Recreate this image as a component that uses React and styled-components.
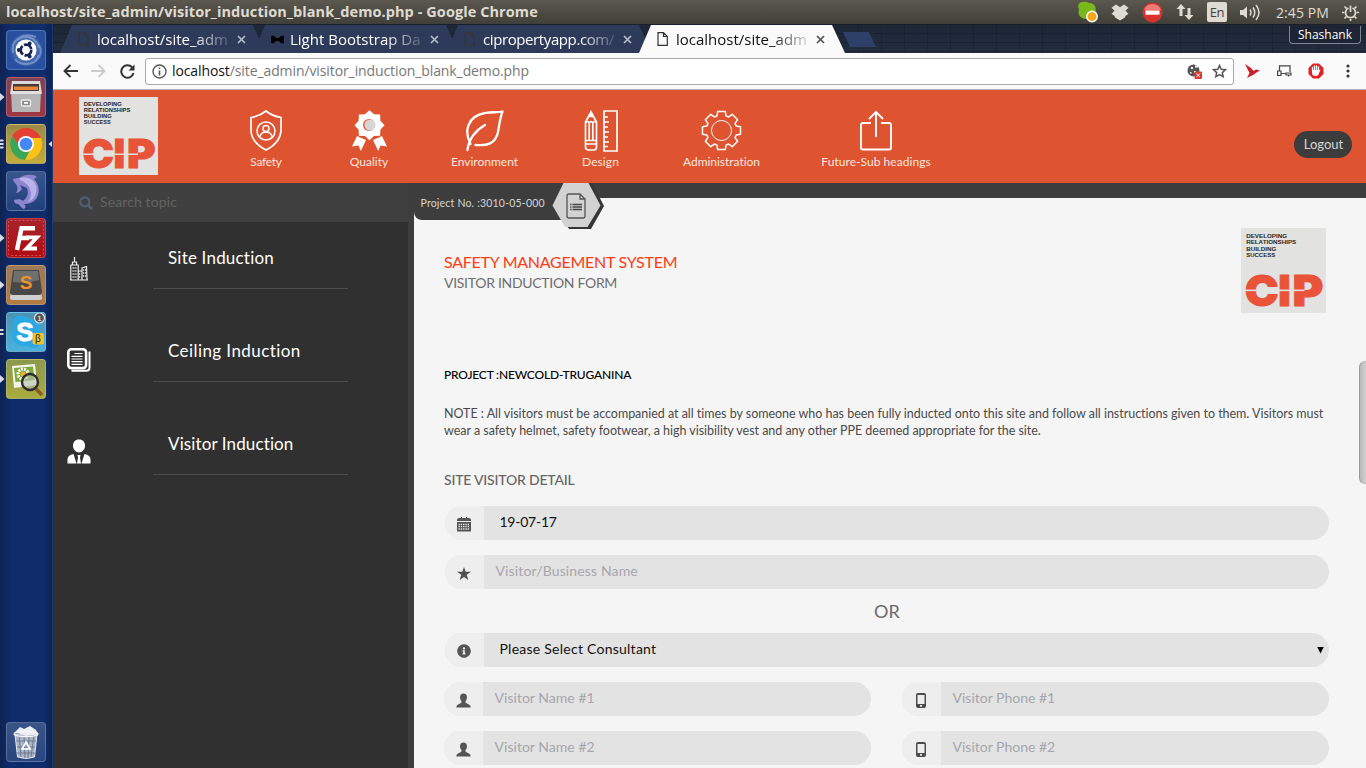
import React from "react";
import styled, { createGlobalStyle, css } from "styled-components";
import { FaInfoCircle } from "react-icons/fa";

const Global = createGlobalStyle`
  *, *::before, *::after { box-sizing: border-box; }
  html, body { margin: 0; padding: 0; overflow: hidden; }
  body { font-family: Lato, "Liberation Sans", sans-serif; font-variant-ligatures: none; }
  svg { display: block; flex: none; }
`;

const uiFont = '"Open Sans", "Noto Sans", sans-serif';

/* ---------- desktop frame ---------- */

const Desktop = styled.div`
  width: 1366px;
  height: 768px;
  display: flex;
  flex-direction: column;
  overflow: hidden;
`;

const TitleBar = styled.header`
  height: 24px;
  flex: none;
  display: flex;
  align-items: center;
  justify-content: space-between;
  padding: 0 7px 0 6px;
  background: linear-gradient(#5b584e, #403f39);
  color: #dfdbd2;
  font-family: ${uiFont};
`;

const WindowTitle = styled.div`
  font-size: 14.5px;
  font-weight: 700;
  letter-spacing: 0.075px;
  line-height: 22px;
  white-space: nowrap;
`;

const Tray = styled.div`
  display: flex;
  align-items: center;
  height: 24px;
`;

const TrayItem = styled.div`
  margin-left: ${(p) => p.$gap}px;
`;

const Lang = styled(TrayItem)`
  width: 20px;
  height: 20px;
  border-radius: 2px;
  background: #dfdbd2;
  color: #45433c;
  font-size: 13px;
  line-height: 20px;
  letter-spacing: -0.4px;
  text-align: center;
`;

const Clock = styled(TrayItem)`
  font-size: 14px;
  line-height: 23px;
  letter-spacing: 0.1px;
  white-space: nowrap;
`;

const Workspace = styled.div`
  flex: 1;
  min-height: 0;
  display: flex;
`;

const Launcher = styled.aside`
  width: 53px;
  flex: none;
  display: flex;
  flex-direction: column;
  align-items: flex-start;
  gap: 7px;
  padding: 6px 0 6px;
  background: linear-gradient(90deg, #0e2352, #0e2c69 20%, #0f2d6b 85%, #0b2354);
  border-right: 1px solid #1d3a73;
`;

const Slot = styled.div`
  height: 40px;
  width: 53px;
  display: grid;
  grid-template-columns: 6px 40px 6px;
  align-items: center;
  ${(p) => p.$bottom && css`margin-top: auto;`}
`;

const Tile = styled.div`
  width: 40px;
  height: 40px;
  border-radius: 4px;
  border: 1px solid rgba(255, 255, 255, 0.2);
  background: ${(p) => p.$bg};
  display: flex;
  align-items: center;
  justify-content: center;
  overflow: hidden;
`;

/* ---------- browser chrome ---------- */

const Browser = styled.main`
  flex: 1;
  min-width: 0;
  display: flex;
  flex-direction: column;
`;

const TabStrip = styled.div`
  height: 29px;
  flex: none;
  display: flex;
  align-items: flex-end;
  padding-left: 7px;
  background:
    repeating-linear-gradient(90deg, rgba(10, 16, 28, 0.2) 0 1px, transparent 1px 23px),
    repeating-linear-gradient(rgba(10, 16, 28, 0.3) 0 1px, transparent 1px 9px),
    linear-gradient(#1d2635, #232d3f);
  font-family: ${uiFont};
`;

const Tab = styled.div`
  width: 206px;
  height: 28px;
  margin-right: -13px;
  position: relative;
  z-index: ${(p) => (p.$active ? 2 : 1)};
  display: grid;
  grid-template-columns: 12px 133px 12px;
  column-gap: 7px;
  align-items: center;
  padding: 0 0 0 18px;
  color: ${(p) => (p.$active ? "#111" : "#fff")};
  background: ${(p) => (p.$active ? "#fafafa" : "#2d3a59")};
  clip-path: polygon(0 100%, 12px 0, 193px 0, 100% 100%);
`;

const TabLabel = styled.span`
  font-size: 15px;
  line-height: 26px;
  padding-bottom: 1px;
  white-space: nowrap;
  overflow: hidden;
  letter-spacing: ${(p) => p.$ls || 0}px;
  mask-image: linear-gradient(90deg, #000 72%, rgba(0, 0, 0, 0.12));
`;

const NewTab = styled.div`
  width: 33px;
  height: 15px;
  margin: 0 0 6px 11px;
  background: #2f4068;
  clip-path: polygon(0 0, 26px 0, 100% 100%, 7px 100%);
`;

const UserBadge = styled.div`
  align-self: flex-start;
  margin: 2px 5px 0 auto;
  width: 72px;
  height: 18px;
  border: 1px solid #7d8591;
  border-top: 0;
  border-radius: 0 0 4px 4px;
  background: #1d2433;
  color: #fff;
  font-size: 12px;
  line-height: 18px;
  text-align: center;
`;

const Toolbar = styled.div`
  height: 37px;
  flex: none;
  display: flex;
  align-items: center;
  padding: 0 0 0 10px;
  background: #fafafa;
  border-bottom: 1px solid #b4b4b4;
  font-family: ${uiFont};
`;

const ToolIcon = styled.div`
  width: ${(p) => p.$w}px;
  margin-left: ${(p) => p.$gap || 0}px;
`;

const AddressBar = styled.div`
  width: 1089px;
  height: 27px;
  margin-left: 10px;
  display: flex;
  align-items: center;
  border: 1px solid #a9a9a9;
  border-radius: 3px;
  background: #fff;
  padding: 0 6px;
`;

const Url = styled.div`
  flex: 1;
  margin-left: 5px;
  font-size: 14px;
  line-height: 24px;
  letter-spacing: -0.1px;
  color: #777;
  white-space: nowrap;
`;

const UrlHost = styled.span`
  color: #111;
`;

/* ---------- site header ---------- */

const SiteHeader = styled.header`
  height: 93px;
  flex: none;
  display: flex;
  align-items: flex-start;
  padding: 7px 14px 0 26px;
  background: #de5330;
`;

const Nav = styled.nav`
  flex: 1;
  display: flex;
  align-items: flex-start;
  padding-top: 13px;
`;

const NavItem = styled.a`
  width: ${(p) => p.$w}px;
  margin-left: ${(p) => p.$gap}px;
  display: flex;
  flex-direction: column;
  align-items: center;
`;

const NavIcon = styled.span`
  height: 43px;
  display: flex;
`;

const NavLabel = styled.span`
  font-size: 12px;
  line-height: 18px;
  letter-spacing: ${(p) => p.$ls || 0}px;
  color: #fbe6df;
  white-space: nowrap;
`;

const Logout = styled.button`
  margin-top: 34px;
  width: 58px;
  height: 27px;
  padding: 0 0 1px 1px;
  border: 0;
  border-radius: 14px;
  background: #3c3c3c;
  color: #d6d6d6;
  font: 13px/26px Lato, sans-serif;
`;

/* ---------- page body ---------- */

const Page = styled.div`
  flex: 1;
  min-height: 0;
  display: flex;
  background: #3d3d3d;
`;

const Sidebar = styled.aside`
  width: 355px;
  flex: none;
  margin-right: 6px;
  background: #303030;
`;

const Search = styled.div`
  height: 39px;
  display: flex;
  align-items: center;
  gap: 7px;
  padding-left: 26px;
  background: #404040;
  color: #636363;
  font-size: 14px;
  letter-spacing: 0.11px;
`;

const SearchHint = styled.span`
  padding-bottom: 3px;
`;

const Topic = styled.a`
  height: 93px;
  display: grid;
  grid-template-columns: 100px 195px;
  color: #fff;
`;

const TopicIcon = styled.span`
  display: flex;
  justify-content: flex-start;
  padding: ${(p) => p.$top}px 0 0 ${(p) => p.$left}px;
`;

const TopicLabel = styled.span`
  height: 67px;
  padding: 25px 0 0 15px;
  border-bottom: 1px solid #4e4e4e;
  font-size: 17px;
  line-height: 22px;
  letter-spacing: ${(p) => p.$ls}px;
  white-space: nowrap;
`;

const Main = styled.section`
  flex: 1;
  min-width: 0;
  display: flex;
  flex-direction: column;
`;

const Sheet = styled.div`
  flex: 1;
  min-height: 0;
  margin-top: 15px;
  display: flex;
  background: #f5f5f5;
`;

const Content = styled.div`
  width: 945px;
  flex: none;
  padding: 0 30px;
`;

const ProjectTag = styled.div`
  width: 190px;
  height: 45px;
  margin: -15px 0 0 -30px;
  display: flex;
  align-items: flex-start;
`;

const ProjectNo = styled.div`
  width: 148px;
  height: 37px;
  flex: none;
  padding: 10px 0 0 6.5px;
  border-radius: 0 0 0 8px;
  background: #3d3d3d;
  color: #d6d6d6;
  font-size: 10.5px;
  line-height: 20px;
  letter-spacing: 0.2px;
  white-space: nowrap;
`;

const HexBadge = styled.div`
  margin-left: -10px;
`;

const Heading = styled.div`
  display: flex;
  justify-content: space-between;
  height: 138px;
  padding-right: 3px;
`;

const Titles = styled.div`
  padding-top: 22px;
`;

const Title = styled.h1`
  margin: 0;
  font-size: 16px;
  font-weight: 400;
  line-height: 24px;
  letter-spacing: -0.26px;
  color: #fb3c14;
`;

const Subtitle = styled.h2`
  margin: 0;
  font-size: 14px;
  font-weight: 400;
  line-height: 18px;
  letter-spacing: -0.3px;
  color: #6e6e6e;
`;

const ProjectName = styled.p`
  margin: 0;
  font-size: 12px;
  font-weight: 500;
  line-height: 18px;
  letter-spacing: -0.18px;
  color: #000;
`;

const Note = styled.p`
  margin: 21px 0 0;
  font-size: 12.5px;
  line-height: 17px;
  letter-spacing: -0.028px;
  color: #4a4a4a;
  white-space: nowrap;
`;

const SectionTitle = styled.h3`
  margin: 31px 0 16px;
  font-size: 14px;
  font-weight: 500;
  line-height: 20px;
  letter-spacing: -0.2px;
  color: #666;
`;

const Field = styled.div`
  flex: none;
  width: ${(p) => p.$w}px;
  height: 34px;
  display: flex;
  border-radius: 17px;
  overflow: hidden;
  background: #e3e3e3;
`;

const Addon = styled.div`
  width: 39px;
  flex: none;
  display: flex;
  align-items: center;
  justify-content: center;
  padding: 2px 1px 0 0;
  background: #eee;
  color: #555;
`;

const Value = styled.div`
  flex: 1;
  padding-left: ${(p) => (p.$filled ? 15.5 : 11.5)}px;
  color: ${(p) => (p.$filled ? "#111" : "#a6a6ad")};
  font-size: 14px;
  line-height: 32px;
  letter-spacing: ${(p) => p.$ls || 0}px;
  white-space: nowrap;
`;

const Caret = styled.span`
  align-self: center;
  margin-right: 5px;
  width: 7px;
  height: 7px;
  background: #000;
  clip-path: polygon(0 0, 100% 0, 50% 100%);
`;

const Rows = styled.div`
  display: flex;
  flex-direction: column;
  gap: 15px;
  padding-left: 1px;
`;

const Pair = styled.div`
  display: flex;
  justify-content: space-between;
  margin-left: -1px;
`;

const Or = styled.div`
  margin: -6px 0;
  width: 884px;
  height: 26px;
  line-height: 26px;
  font-size: 18px;
  letter-spacing: 0.1px;
  text-align: center;
  color: #6a6a6a;
`;

const ScrollTrack = styled.div`
  width: 7px;
  padding-top: 163px;
`;

const ScrollThumb = styled.div`
  height: 123px;
  border: 1px solid #b5b5b5;
  border-left-color: #999;
  border-right: 0;
  border-radius: 6px 0 0 6px;
  background: linear-gradient(90deg, #b9b9b9, #d0d0d0);
`;

/* ---------- drawings ---------- */

const CipLogo = ({ w, h }) => (
  <svg width={w} height={h} viewBox="0 0 79 79" preserveAspectRatio="none" fontFamily="Inter, 'Liberation Sans', sans-serif">
    <rect width="79" height="79" fill="#e2e2e0" />
    <g fontSize="5.7" fontWeight="700" fill="#262626" fontFamily="'Liberation Sans', sans-serif">
      <text x="4.8" y="9.3" textLength="38" lengthAdjust="spacingAndGlyphs">DEVELOPING</text>
      <text x="4.8" y="15.2" textLength="46.5" lengthAdjust="spacingAndGlyphs">RELATIONSHIPS</text>
      <text x="4.8" y="21.1" textLength="28" lengthAdjust="spacingAndGlyphs">BUILDING</text>
      <text x="4.8" y="27" textLength="27" lengthAdjust="spacingAndGlyphs">SUCCESS</text>
    </g>
    <g fontSize="40" fontWeight="900" fill="#e9533a" stroke="#e9533a" strokeWidth="0.900">
      <text x="3.4" y="72.4" textLength="31.500" lengthAdjust="spacingAndGlyphs">C</text>
      <text x="34.600" y="72.4">I</text>
      <text x="47.9" y="72.4" textLength="28.6" lengthAdjust="spacingAndGlyphs">P</text>
    </g>
    <rect x="3" y="57.2" width="11" height="1.5" fill="#e2e2e0" />
    <rect x="35.500" y="57.2" width="11" height="1.5" fill="#e2e2e0" />
    <rect x="49" y="57.2" width="10" height="1.5" fill="#e2e2e0" />
  </svg>
);

const ShieldIcon = () => (
  <svg width="32" height="41" viewBox="0 0 32 41" fill="none" stroke="#fff" strokeWidth="1.7">
    <path d="M16 1 Q10 6 1 7.500V21Q2 33 16 40Q30 33 31 21V7.500Q22 6 16 1Z" />
    <circle cx="16" cy="21" r="9" strokeWidth="1.500" />
    <circle cx="16" cy="18.500" r="3" strokeWidth="1.500" />
    <path d="M9.500 27.500Q11 22.500 14 22.200H18Q21 22.500 22.500 27.500" strokeWidth="1.500" />
  </svg>
);

const starPoints = Array.from({ length: 16 }, (_, i) => {
  const r = i % 2 ? 11.8 : 15;
  const a = (i * Math.PI) / 8 - Math.PI / 2;
  return `${(17.5 + r * Math.cos(a)).toFixed(2)},${(15.2 + r * Math.sin(a)).toFixed(2)}`;
}).join(" ");

const QualityIcon = () => (
  <svg width="35" height="41" viewBox="0 0 35 41">
    <polygon points={starPoints} fill="#fff" />
    <path d="M5 26L14 30L8.800 41L6.500 35.500L0 36.500ZM30 26L21 30L26.200 41L28.500 35.500L35 36.500Z" fill="#fff" />
    <path d="M7.500 27H13M22 27H27.500" stroke="#de5330" />
    <circle cx="17" cy="15" r="6" fill="#de5330" />
    <circle cx="18" cy="15" r="5.600" fill="#d6d6d6" />
  </svg>
);

const LeafIcon = () => (
  <svg width="39" height="42" viewBox="0 0 39 42" fill="none" stroke="#fff" strokeWidth="2.300" strokeLinecap="round" strokeLinejoin="round">
    <path d="M2.500 40C3.500 29 11 20 20 15M5.500 34C-1 22 2 6 20 3C27 1.500 33 3 37.500 1.500C35 8 34.500 14 33 22C30.500 34 22 36 10.500 35" />
  </svg>
);

const DesignIcon = () => (
  <svg width="34" height="42" viewBox="0 0 34 42" fill="none" stroke="#fff" strokeWidth="1.700">
    <path d="M1.500 12L7 2L12.500 12V37Q12.500 40 9.500 40H4.500Q1.500 40 1.500 37ZM1.500 30.500H12.500M1.500 34H12.500M5.200 13V30M8.800 13V30M1.500 13Q3.500 10 5.200 13Q7 10 8.800 13Q10.500 10 12.500 13" />
    <path d="M5 6.500L7 2.500L9 6.500Z" fill="#fff" />
    <path d="M20 1H33V41H20ZM20 7H24M20 12H25M20 17H24M20 22H25M20 27H24M20 32H25M20 36.500H24" />
  </svg>
);

const gearPoints = Array.from({ length: 8 }, (_, i) => {
  const a = (i * Math.PI) / 4;
  return [
    [15.3, -0.3],
    [19.4, -0.2],
    [19.4, 0.2],
    [15.3, 0.3],
  ].map(([r, d]) => `${(20.5 + r * Math.cos(a + d)).toFixed(2)},${(20.5 + r * Math.sin(a + d)).toFixed(2)}`);
})
  .flat()
  .join(" ");

const GearIcon = () => (
  <svg width="41" height="41" viewBox="0 0 41 41" fill="none" stroke="#fff" strokeWidth="1.500" strokeLinejoin="round">
    <polygon points={gearPoints} />
    <circle cx="20.500" cy="20.500" r="10" strokeWidth="1" />
  </svg>
);

const ShareIcon = () => (
  <svg width="32" height="41" viewBox="0 0 32 41" fill="none" stroke="#fff" strokeWidth="1.900" strokeLinejoin="round">
    <path d="M11 13H3Q1 13 1 15V37.500Q1 39.500 3 39.500H29Q31 39.500 31 37.500V15Q31 13 29 13H21" />
    <path d="M16 27V2M9 9L16 1.800L23 9" />
  </svg>
);

const PersonIcon = () => (
  <svg width="15" height="15" viewBox="0 0 15 15" fill="currentColor">
    <path d="M7.500 0.500C9.700 0.500 11 2 11 4.200C11 6 10.300 7.300 9.400 8.200C9.400 9.800 9.900 10 11.500 10.700C13.700 11.600 14.700 12.300 14.700 14.500H0.300C0.300 12.300 1.300 11.600 3.500 10.700C5.100 10 5.600 9.800 5.600 8.200C4.700 7.300 4 6 4 4.200C4 2 5.300 0.500 7.500 0.500Z" />
  </svg>
);

const PhoneIcon = () => (
  <svg width="10" height="15" viewBox="0 0 10 15">
    <rect width="10" height="15" rx="2" fill="#4c4c4c" />
    <rect x="1.500" y="2" width="7" height="9" fill="#eee" />
    <rect x="4" y="12" width="2" height="1.700" fill="#eee" />
  </svg>
);

const CalendarIcon = () => (
  <svg width="14" height="15" viewBox="0 0 14 15">
    <path d="M2 1h2v-1h1v1h4v-1h1v1h2q2 0 2 2v1H0V3q0-2 2-2ZM0 5h14v9.500H0Z" fill="#555" />
    <path d="M1.500 7.500H12.500M1.500 9.700H12.500M1.500 12H12.500" stroke="#eee" strokeWidth="1.300" strokeDasharray="1.300 1" />
  </svg>
);

const StarIcon = () => (
  <svg width="14" height="13" viewBox="0 0 14 13" fill="#505050">
    <path d="M7 0L8.700 4.700H14L9.700 7.800L11.300 13L7 9.900L2.700 13L4.300 7.800L0 4.700H5.300Z" />
  </svg>
);

const HexIcon = () => (
  <svg width="52" height="46" viewBox="0 0 52 46">
    <path d="M13 0H40L52 23L39 46H17L4 23Z" fill="#363636" />
    <path d="M11.500 0H36.500L48.500 22.500L35.500 44H13L0.500 22.500Z" fill="#d2d2d2" />
    <path d="M17 11H28L33 16V33Q33 35 31 35H17Q15 35 15 33V13Q15 11 17 11ZM28 11V16H33" fill="none" stroke="#555" strokeWidth="1.300" />
    <path d="M20.500 21.500H30M20.500 24H30M20.500 26.500H30" stroke="#444" strokeWidth="1.300" />
    <path d="M18.200 21.500H19.500M18.200 24H19.500M18.200 26.500H19.500" stroke="#444" strokeWidth="1.300" />
  </svg>
);

const CityIcon = () => (
  <svg width="18" height="24" viewBox="0 0 18 24" fill="none" stroke="#eee" strokeWidth="1.200">
    <path d="M4.500 0V5M2.500 8V5H6.500V8M0.800 23V8H8.200V23ZM8.200 14H12V23M12 23V11L16.500 9.500L17 23ZM0 23H18" />
    <path d="M2.500 11H7M2.500 14H7M2.500 17H7M2.500 20H7M13 13H16M13 16H16M13 19H16M9 17H11M9 20H11" strokeDasharray="1.200 0.800" strokeWidth="1.500" />
  </svg>
);

const DocsIcon = () => (
  <svg width="24" height="24" viewBox="0 0 24 24" fill="none" stroke="#fff">
    <rect x="1.300" y="1.300" width="17.800" height="18.800" rx="3" strokeWidth="2.600" />
    <path d="M22.500 3.500V19.500Q22.500 22.800 19.300 22.800H4.500" strokeWidth="2" />
    <path d="M7.500 5.500H15.500M4.500 8.300H15.500M4.500 11H15.500M4.500 13.700H15.500M4.500 16.400H15.500" strokeWidth="1.200" />
  </svg>
);

const BusinessIcon = () => (
  <svg width="24" height="25" viewBox="0 0 24 25" fill="#fff">
    <path d="M12 0.500C16 0.500 18 3 18 7C18 10.500 15 13.500 12 13.500S6 10.500 6 7C6 3 8 0.500 12 0.500Z" />
    <path d="M6.500 15L9.500 24.500H0.500V20.500Q0.500 16 6.500 15ZM17.500 15L14.500 24.500H23.500V20.500Q23.500 16 17.500 15ZM10.500 16H13.500L13 18.500L14 24.500H10L11 18.500Z" />
  </svg>
);

const FileIcon = ({ color }) => (
  <svg width="11" height="14" viewBox="0 0 11 14" fill="none" stroke={color} strokeWidth="1.200">
    <path d="M1 0.700H6.500L10.300 4.500V13.300H1ZM6.500 0.700V4.500H10.300" />
  </svg>
);

const BowIcon = () => (
  <svg width="13" height="9" viewBox="0 0 13 9">
    <path d="M0 1.500Q1 0 3 1L5.500 3H7.500L10 1Q12 0 13 1.500V7.500Q12 9 10 8L7.500 6H5.500L3 8Q1 9 0 7.500Z" fill="#000" />
  </svg>
);

const CloseIcon = ({ color }) => (
  <svg width="9" height="9" viewBox="0 0 9 9" stroke={color} strokeWidth="1.700">
    <path d="M1 1L8 8M8 1L1 8" />
  </svg>
);

const Arrow = ({ color, flip }) => (
  <svg width="15" height="14" viewBox="0 0 15 14" fill="none" stroke={color} strokeWidth="1.900">
    <path d={flip ? "M0 7H13.500M7.500 1L13.500 7L7.500 13" : "M15 7H1.500M7.500 1L1.500 7L7.500 13"} />
  </svg>
);

const ReloadIcon = () => (
  <svg width="15" height="15" viewBox="0 0 15 15" fill="none" stroke="#333" strokeWidth="2">
    <path d="M13.500 9A6.200 6.200 0 1 1 12 3.200L13 4.500" />
    <path d="M14.500 0.500V6.500H8.500Z" fill="#333" stroke="none" />
  </svg>
);

const PointerIcon = ({ kind }) => (
  <svg width="6" height="12" viewBox="0 0 6 12" fill="#d9dce4" stroke="none">
    {kind === "right" && <path d="M0 2L4.500 6L0 10Z" />}
    {kind === "left" && <path d="M6 3L2.500 6L6 9Z" />}
    {kind === "three" && <path d="M0 1.500H3L4 2.500L3 3.500H0ZM0 5H3L4 6L3 7H0ZM0 8.500H3L4 9.500L3 10.500H0Z" />}
    {kind === "two" && <path d="M0 3H3L4 4L3 5H0ZM0 7H3L4 8L3 9H0Z" />}
  </svg>
);

const UbuntuArt = () => (
  <svg width="38" height="38" viewBox="0 0 38 38">
    <g fill="none" stroke="#b9cbea" strokeWidth="2" opacity="0.450">
      <path d="M6 22C3 9 16 1 29 6M32 14C38 26 26 36 13 32M8 28C14 36 28 35 32 24M10 9C18 2 30 7 32 17" />
    </g>
    <circle cx="19" cy="19" r="10.500" fill="#fff" />
    <circle cx="19" cy="19" r="5.300" fill="none" stroke="#15254f" strokeWidth="2.700" strokeDasharray="9.600 1.500" />
    <circle cx="11.700" cy="19" r="1.900" fill="#15254f" />
    <circle cx="22.700" cy="12.500" r="1.900" fill="#15254f" />
    <circle cx="22.700" cy="25.500" r="1.900" fill="#15254f" />
  </svg>
);

const FilesArt = () => (
  <svg width="38" height="38" viewBox="0 0 38 38">
    <path d="M5 3H33L35 16H3Z" fill="#d9d9d9" />
    <path d="M6 6H32V14H6Z" fill="#4a3a33" />
    <path d="M7 8.500H31V12H7Z" fill="#e8883c" />
    <path d="M4 13H34L33 34H5Z" fill="#b5b5b5" />
    <path d="M4 13H34V16H4Z" fill="#e0e0e0" />
    <rect x="14.500" y="22" width="9" height="6" rx="1" fill="#8a8a8a" stroke="#eee" strokeWidth="1.300" />
    <rect x="17" y="24" width="4" height="1.800" fill="#fff" />
  </svg>
);

const ChromeArt = () => (
  <svg width="38" height="38" viewBox="0 0 38 38">
    <circle cx="19" cy="19" r="16" fill="#fbc116" />
    <path d="M19 19L5.150 11A16 16 0 0 1 32.850 11L33.800 13H19Z" fill="#e34133" />
    <path d="M5.150 11L13.800 22L19 19H27L24.500 22.500L18 35A16 16 0 0 1 5.150 11Z" fill="#3aa757" />
    <path d="M5.150 11A16 16 0 0 1 32.850 11L33.800 13H19A6.500 6.500 0 0 0 12.500 21Z" fill="#e34133" />
    <circle cx="19" cy="19" r="8" fill="#fff" />
    <circle cx="19" cy="19" r="6.300" fill="#4587f4" />
  </svg>
);

const DolphinArt = () => (
  <svg width="38" height="38" viewBox="0 0 38 38">
    <path d="M6 7L13 5.500C20 1 29 3 30 5L27 7C33 13 33 22 29 27C26 31 21 32 17 32C19 34 19 36 17 37C14 36 13 33 11 32C9 32 7 31 7 28C11 27 14 27 16 29C20 26 22 22 20 16L13 13L15 17C13 20 10 21 9 21C11 18 11 15 9 12C7 10 6 9 6 7Z" fill="#8d86cf" />
    <path d="M13 6C21 4 28 8 29.500 15C30 22 27 28 21 30C27 23 24 12 13 8Z" fill="#b9b3ea" />
  </svg>
);

const FilezillaArt = () => (
  <svg width="38" height="38" viewBox="0 0 38 38">
    <rect x="1.500" y="1.500" width="35" height="35" rx="2" fill="none" stroke="#d06a6a" strokeWidth="0.800" strokeDasharray="2 2" />
    <g fill="none" stroke="#fff" strokeWidth="4.400">
      <path d="M10 31L14.500 9.300H28M13 19H22" />
      <path d="M19 18.300H30L19.500 29.500H30" strokeWidth="3.800" />
    </g>
  </svg>
);

const SublimeArt = () => (
  <svg width="38" height="38" viewBox="0 0 38 38" fontFamily="'Liberation Sans', sans-serif">
    <path d="M4 25L3 32Q3 34 5 34H33Q35 34 35 32L34 25Z" fill="#cfcfcf" />
    <path d="M6 4H32L35 26Q35 29 32 29H6Q3 29 3 26Z" fill="#484848" />
    <path d="M7 5H31L32 14Q20 18 6 16Z" fill="#6f6f6f" />
    <text x="19" y="22.500" fontSize="19" fontWeight="700" fill="#f0912a" textAnchor="middle">S</text>
  </svg>
);

const SkypeArt = () => (
  <svg width="38" height="38" viewBox="0 0 38 38" fontFamily="'Liberation Sans', sans-serif">
    <path d="M6 8C8 1 17 2 20 5C30 5 35 14 32 22C37 32 28 38 21 33C11 35 2 27 6 17Z" fill="#2aa9e4" />
    <text x="18" y="28" fontSize="26" fontWeight="700" fill="#fff" stroke="#fff" textAnchor="middle">S</text>
    <rect x="25.500" y="20" width="11.500" height="11.500" rx="2" fill="#f2c02c" />
    <text x="31" y="29" fontSize="10" fill="#222" textAnchor="middle">β</text>
    <circle cx="32.500" cy="5" r="5" fill="#555" stroke="#ddd" strokeWidth="1.200" />
    <text x="32.500" y="8" fontSize="8" fill="#fff" textAnchor="middle">1</text>
  </svg>
);

const ViewerArt = () => (
  <svg width="38" height="38" viewBox="0 0 38 38">
    <path d="M5 6L28 4L30 25L7 28Z" fill="#f4f5ea" />
    <path d="M7 8L26 6.500L27.500 20L8.500 22Z" fill="#7ea93a" />
    <circle cx="16" cy="14" r="5" fill="none" stroke="#fff" strokeWidth="3" strokeDasharray="2 1" />
    <circle cx="16" cy="14" r="2.500" fill="#e8b42c" />
    <path d="M28 28L35 35" stroke="#8a5a25" strokeWidth="3.500" />
    <circle cx="23" cy="22" r="8" fill="#b4bfae" fillOpacity="0.600" stroke="#2d2d2d" strokeWidth="2.400" />
  </svg>
);

const TrashArt = () => (
  <svg width="38" height="38" viewBox="0 0 38 38">
    <path d="M8 11H30L27.500 34Q19 37 10.500 34Z" fill="#a9b4c6" stroke="#e5e9f0" />
    <path d="M12 12L14 34M17 12L18 35M22 12L21 35M27 12L24 34M9 18H29M10 24H28M10 30H28" stroke="#687488" strokeWidth="0.900" />
    <path d="M8 9L13 4L17 6L23 3L29 7L31 11L19 13Z" fill="#eceff3" />
    <ellipse cx="19" cy="11" rx="12" ry="2.500" fill="none" stroke="#f4f6f9" strokeWidth="1.300" />
    <path d="M19 19L23 26H15Z" fill="none" stroke="#fff" strokeWidth="1.600" />
  </svg>
);

/* ---------- data ---------- */

const apps = [
  { Art: UbuntuArt, bg: "radial-gradient(circle, #7e9dd0, #27509f 65%)" },
  { Art: FilesArt, bg: "linear-gradient(#7e4456, #a03642)", left: "right" },
  { Art: ChromeArt, bg: "linear-gradient(#9a8a48, #c3ad3c)", left: "three", right: "left" },
  { Art: DolphinArt, bg: "linear-gradient(#38558d, #21407c)" },
  { Art: FilezillaArt, bg: "linear-gradient(#a8222b, #b00d12)", left: "right" },
  { Art: SublimeArt, bg: "linear-gradient(#9b7a58, #b17c43)", left: "right" },
  { Art: SkypeArt, bg: "linear-gradient(#4b93b5, #49b2dc)", left: "two" },
  { Art: ViewerArt, bg: "linear-gradient(#8c984e, #a9ac3c)", left: "right" },
];

const tabs = [
  { label: "localhost/site_adm", icon: <FileIcon color="#35353a" /> },
  { label: "Light Bootstrap Da", icon: <BowIcon /> },
  { label: "cipropertyapp.com/", icon: <FileIcon color="#35353a" />, ls: -0.4 },
  { label: "localhost/site_adm", icon: <FileIcon color="#333" />, active: true },
];

const nav = [
  { label: "Safety", Icon: ShieldIcon, w: 32, gap: 92, ls: -0.25 },
  { label: "Quality", Icon: QualityIcon, w: 38, gap: 68 },
  { label: "Environment", Icon: LeafIcon, w: 67, gap: 63 },
  { label: "Design", Icon: DesignIcon, w: 37, gap: 64, ls: 0.1 },
  { label: "Administration", Icon: GearIcon, w: 77, gap: 64, ls: -0.03 },
  { label: "Future-Sub headings", Icon: ShareIcon, w: 110, gap: 61, ls: 0.05 },
];

const topics = [
  { label: "Site Induction", Icon: CityIcon, top: 35, left: 17, ls: 0.2 },
  { label: "Ceiling Induction", Icon: DocsIcon, top: 33, left: 14, ls: 0.42 },
  { label: "Visitor Induction", Icon: BusinessIcon, top: 31, left: 14, ls: 0.12 },
];

const FormField = ({ w, icon, text, filled, ls, select }) => (
  <Field $w={w}>
    <Addon>{icon}</Addon>
    <Value $filled={filled} $ls={ls}>{text}</Value>
    {select && <Caret />}
  </Field>
);

const SystemTray = () => (
  <Tray>
    <svg width="22" height="22" viewBox="0 0 22 22">
      <path d="M1 5C2 0 9 0 12 2C18 2 20 7 18 12C20 18 15 20 11 18C4 19 0 13 2 9Z" fill="#78b81a" />
      <circle cx="15" cy="15.500" r="5.200" fill="#f6a81c" stroke="#fff" strokeWidth="1.500" />
    </svg>
    <TrayItem $gap={12}>
      <svg width="18" height="17" viewBox="0 0 18 17" fill="#dfdbd2">
        <path d="M5 0.500L9 3.200L13 0.500L17.500 3.800L14.500 6.700L17.500 9.800L14.300 12V13.200L9 16.500L3.700 13.200V12L0.500 9.800L3.500 6.700L0.500 3.800Z" />
      </svg>
    </TrayItem>
    <TrayItem $gap={13}>
      <svg width="21" height="21" viewBox="0 0 21 21">
        <circle cx="10.500" cy="10.500" r="10" fill="#d8322f" />
        <path d="M2 8A9 9 0 0 1 19 8Q10 11 2 8Z" fill="#ef7b73" />
        <rect x="3.500" y="8.700" width="14" height="4" fill="#fff" />
      </svg>
    </TrayItem>
    <TrayItem $gap={13}>
      <svg width="18" height="16" viewBox="0 0 18 16" fill="#dfdbd2">
        <path d="M5 0L9.500 5H6.500V12H3.500V5H0.500ZM13 16L8.500 11H11.500V4H14.500V11H17.500Z" />
      </svg>
    </TrayItem>
    <Lang $gap={13}>En</Lang>
    <TrayItem $gap={13}>
      <svg width="21" height="17" viewBox="0 0 21 17" fill="none" stroke="#dfdbd2" strokeWidth="1.500">
        <path d="M0 6H3L7 2.500V14.500L3 11H0Z" fill="#dfdbd2" stroke="none" />
        <path d="M10 5.500Q12 8.500 10 11.500M13 3.500Q16.500 8.500 13 13.500M16 1Q22 8.500 16 16" />
      </svg>
    </TrayItem>
    <Clock $gap={15}>2:45 PM</Clock>
    <TrayItem $gap={13}>
      <svg width="17" height="17" viewBox="0 0 17 17" fill="none" stroke="#dfdbd2" strokeWidth="1.700">
        <path d="M6.500 4A5 5 0 1 0 10.500 4M8.500 1.500V8" />
        <path d="M8.500 15V17M0 8.500H2.500M14.500 8.500H17M2.500 2.500L4.500 4.500M14.500 2.500L12.500 4.500M2.500 14.500L4.500 12.500M14.500 14.500L12.500 12.500" />
      </svg>
    </TrayItem>
  </Tray>
);

export default function App() {
  return (
    <Desktop>
      <Global />
      <TitleBar>
        <WindowTitle>localhost/site_admin/visitor_induction_blank_demo.php - Google Chrome</WindowTitle>
        <SystemTray />
      </TitleBar>
      <Workspace>
        <Launcher>
          {apps.map(({ Art, bg, left, right }, i) => (
            <Slot key={i}>
              <PointerIcon kind={left} />
              <Tile $bg={bg}><Art /></Tile>
              <PointerIcon kind={right} />
            </Slot>
          ))}
          <Slot $bottom>
            <PointerIcon />
            <Tile $bg="linear-gradient(#3a5487, #2a4680)"><TrashArt /></Tile>
          </Slot>
        </Launcher>
        <Browser>
          <TabStrip>
            {tabs.map((t, i) => (
              <Tab key={i} $active={t.active}>
                {t.icon}
                <TabLabel $ls={t.ls}>{t.label}</TabLabel>
                <CloseIcon color={t.active ? "#555" : "#b5bccb"} />
              </Tab>
            ))}
            <NewTab />
            <UserBadge>Shashank</UserBadge>
          </TabStrip>
          <Toolbar>
            <ToolIcon $w={15}><Arrow color="#333" /></ToolIcon>
            <ToolIcon $w={15} $gap={13}><Arrow color="#ccc" flip /></ToolIcon>
            <ToolIcon $w={15} $gap={14}><ReloadIcon /></ToolIcon>
            <AddressBar>
              <svg width="15" height="15" viewBox="0 0 15 15" fill="none" stroke="#555" strokeWidth="1.400">
                <circle cx="7.500" cy="7.500" r="6.500" />
                <path d="M7.500 6.500V11.500M7.500 3.500V5" strokeWidth="1.600" />
              </svg>
              <Url><UrlHost>localhost</UrlHost>/site_admin/visitor_induction_blank_demo.php</Url>
              <ToolIcon $w={15}>
                <svg width="15" height="15" viewBox="0 0 15 15">
                  <circle cx="6.500" cy="6.500" r="6" fill="#555" />
                  <path d="M4 3h2v2h-2zM7 7h2v2h-2zM3 8h1.500v1.500h-1.500zM8 1.500h3v2h-3z" fill="#fff" />
                  <rect x="7.500" y="7.500" width="7.500" height="7.500" rx="1" fill="#d93a32" />
                  <path d="M9.500 9.500L13 13M13 9.500L9.500 13" stroke="#fff" />
                </svg>
              </ToolIcon>
              <ToolIcon $w={15} $gap={10}>
                <svg width="15" height="14" viewBox="0 0 15 14" fill="none" stroke="#555" strokeWidth="1.500">
                  <path d="M7.500 1.500L9.200 5.300L13.500 5.700L10.300 8.600L11.200 12.700L7.500 10.500L3.800 12.700L4.700 8.600L1.500 5.700L5.800 5.300Z" />
                </svg>
              </ToolIcon>
            </AddressBar>
            <ToolIcon $w={15} $gap={11}>
              <svg width="15" height="14" viewBox="0 0 15 14">
                <path d="M0 0L6 4L8.500 7L11 5.500L15 6.500L11.500 8.500L8 11L2 14L4.500 9Z" fill="#c9202a" />
              </svg>
            </ToolIcon>
            <ToolIcon $w={15} $gap={17}>
              <svg width="15" height="12" viewBox="0 0 15 12" fill="none" stroke="#444" strokeWidth="1.200">
                <path d="M2.500 6V0.800H13V7M0.600 6H4V10.500H0.600ZM4 8.500H9M9 8H14V10H9ZM11.500 10V11.500" />
              </svg>
            </ToolIcon>
            <ToolIcon $w={16} $gap={16}>
              <svg width="16" height="16" viewBox="0 0 16 16">
                <path d="M5 0.500H11L15.500 5V11L11 15.500H5L0.500 11V5Z" fill="#e02222" />
                <path d="M4.500 7.500V4.500M6.500 7V3M8.500 7V2.800M10.500 7V4" stroke="#fff" strokeWidth="1.300" strokeLinecap="round" />
                <path d="M4 7H11.200L12.500 6.500L10.500 11.500Q9.500 13 7.500 13Q4 13 4 9.500Z" fill="#fff" />
              </svg>
            </ToolIcon>
            <ToolIcon $w={4} $gap={22}>
              <svg width="4" height="14" viewBox="0 0 4 14" fill="#333">
                <circle cx="2" cy="2" r="1.600" /><circle cx="2" cy="7" r="1.600" /><circle cx="2" cy="12" r="1.600" />
              </svg>
            </ToolIcon>
          </Toolbar>
          <SiteHeader>
            <CipLogo w={79} h={78} />
            <Nav>
              {nav.map(({ label, Icon, w, gap, ls }) => (
                <NavItem key={label} $w={w} $gap={gap}>
                  <NavIcon><Icon /></NavIcon>
                  <NavLabel $ls={ls}>{label}</NavLabel>
                </NavItem>
              ))}
            </Nav>
            <Logout>Logout</Logout>
          </SiteHeader>
          <Page>
            <Sidebar>
              <Search>
                <svg width="14" height="14" viewBox="0 0 14 14" fill="none" stroke="#4d5f73" strokeWidth="2.200">
                  <circle cx="5.800" cy="5.800" r="4.500" />
                  <path d="M9 9L13 13" strokeWidth="2.600" />
                </svg>
                <SearchHint>Search topic</SearchHint>
              </Search>
              {topics.map(({ label, Icon, top, left, ls }) => (
                <Topic key={label}>
                  <TopicIcon $top={top} $left={left}><Icon /></TopicIcon>
                  <TopicLabel $ls={ls}>{label}</TopicLabel>
                </Topic>
              ))}
            </Sidebar>
            <Main>
              <Sheet>
                <Content>
                  <ProjectTag>
                    <ProjectNo>Project No. :3010-05-000</ProjectNo>
                    <HexBadge><HexIcon /></HexBadge>
                  </ProjectTag>
                  <Heading>
                    <Titles>
                      <Title>SAFETY MANAGEMENT SYSTEM</Title>
                      <Subtitle>VISITOR INDUCTION FORM</Subtitle>
                    </Titles>
                    <CipLogo w={85} h={85} />
                  </Heading>
                  <ProjectName>PROJECT :NEWCOLD-TRUGANINA</ProjectName>
                  <Note>
                    NOTE : All visitors must be accompanied at all times by someone who has been fully inducted onto this site and follow all instructions given to them. Visitors must
                    <br />
                    wear a safety helmet, safety footwear, a high visibility vest and any other PPE deemed appropriate for the site.
                  </Note>
                  <SectionTitle>SITE VISITOR DETAIL</SectionTitle>
                  <Rows>
                    <FormField w={884} icon={<CalendarIcon />} text="19-07-17" filled ls={-0.25} />
                    <FormField w={884} icon={<StarIcon />} text="Visitor/Business Name" ls={0.14} />
                    <Or>OR</Or>
                    <FormField w={884} icon={<FaInfoCircle size={14} />} text="Please Select Consultant" filled ls={0.25} select />
                    {[1, 2].map((n) => (
                      <Pair key={n}>
                        <FormField w={427} icon={<PersonIcon />} text={`Visitor Name #${n}`} ls={0.03} />
                        <FormField w={427} icon={<PhoneIcon />} text={`Visitor Phone #${n}`} />
                      </Pair>
                    ))}
                  </Rows>
                </Content>
                <ScrollTrack>
                  <ScrollThumb />
                </ScrollTrack>
              </Sheet>
            </Main>
          </Page>
        </Browser>
      </Workspace>
    </Desktop>
  );
}
